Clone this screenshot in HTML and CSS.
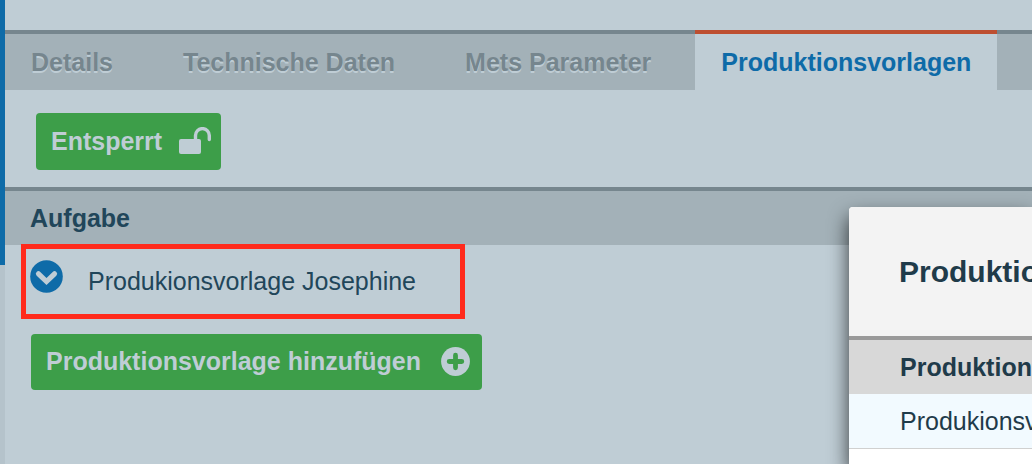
FILE: index.html
```html
<!DOCTYPE html>
<html lang="de">
<head>
<meta charset="utf-8">
<title>Produktionsvorlagen</title>
<link rel="stylesheet" href="styles.css">
</head>
<body>
<div class="app">
  <aside class="rail"><div class="rail-marker"></div></aside>
  <main class="content">
    <nav class="tabs">
      <a class="tab" href="#details">Details</a>
      <a class="tab" href="#technik">Technische Daten</a>
      <a class="tab" href="#mets">Mets Parameter</a>
      <a class="tab tab-active" href="#vorlagen" aria-current="page">Produktionsvorlagen</a>
    </nav>
    <div class="toolbar">
      <button class="button button-lock" type="button">Entsperrt
        <svg class="icon-lock" width="32" height="28" viewBox="0 0 32 28" aria-hidden="true">
          <rect x="0" y="12" width="22" height="15" rx="2" fill="currentColor"/>
          <path d="M16.500 13V8.500a6.900 6.900 0 0 1 13.800 0V12.500" fill="none" stroke="currentColor" stroke-width="3.400" stroke-linecap="round"/>
        </svg>
      </button>
    </div>
    <table class="tasks">
      <thead><tr><th colspan="2">Aufgabe</th></tr></thead>
      <tbody>
        <tr>
          <td class="toggle-cell">
            <button class="toggle" type="button" aria-label="Aufklappen">
              <svg width="33" height="33" viewBox="0 0 33 33" aria-hidden="true">
                <circle cx="16.500" cy="16.500" r="16.300" fill="#0e6ba8"/>
                <path d="M8.500 13.800l8 7.700 8-7.700" fill="none" stroke="#bfcdd5" stroke-width="5.200" stroke-linecap="round"/>
              </svg>
            </button>
          </td>
          <td class="name-cell">Produkionsvorlage Josephine</td>
        </tr>
      </tbody>
    </table>
    <div class="actions">
      <button class="button button-add" type="button">Produktionsvorlage hinzufügen
        <svg width="29" height="29" viewBox="0 0 29 29" aria-hidden="true">
          <circle cx="14.500" cy="14.500" r="14.400" fill="currentColor"/>
          <path d="M14.500 8.200v12.600M8.200 14.500h12.600" stroke="#3d9e49" stroke-width="4.800" stroke-linecap="round"/>
        </svg>
      </button>
    </div>
  </main>
</div>
<div class="highlight"></div>
<section class="dialog" role="dialog" aria-labelledby="dialog-title">
  <h2 class="dialog-title" id="dialog-title">Produktionsvorlage</h2>
  <table class="dialog-table">
    <thead><tr><th>Produktionsvorlage</th></tr></thead>
    <tbody><tr><td>Produkionsvorlage</td></tr></tbody>
  </table>
</section>
</body>
</html>
```
FILE: styles.css
```css
* { box-sizing: border-box; }

body {
  margin: 0;
  background: #bfcdd5;
  color: #21465a;
  font: 25px/30px "Liberation Sans", Arial, sans-serif;
}

.app { display: flex; min-height: 100vh; }
.rail { flex: 0 0 5px; background: #b5c3cb; }
.rail-marker { height: 265px; background: #0e6ba8; }
.content { flex: 1; min-width: 0; padding-top: 30px; }

.tabs {
  display: flex;
  gap: 18px;
  height: 60px;
  background: #a3b1b8;
  box-shadow: inset 0 4px #76868e;
}
.tab {
  padding: 17px 26px 13px;
  color: #76868e;
  font-weight: bold;
  text-decoration: none;
  text-shadow: 0 2px #bfcdd5;
  white-space: nowrap;
}
.tab-active {
  padding-top: 13px;
  border-top: 4px solid #bd4f31;
  background: #bfcdd5;
  color: #0e6ba8;
  text-shadow: none;
}

.toolbar { padding: 23px 31px 17px; }
.button {
  display: flex;
  align-items: center;
  gap: 17px;
  height: 57px;
  padding: 0 10px 2px 15px;
  border: 0;
  border-radius: 4px;
  background: #3d9e49;
  color: #bfcdd5;
  font: inherit;
  font-weight: bold;
  white-space: nowrap;
}
.button-add { gap: 20px; height: 56px; padding-right: 12px; }

.tasks { width: 100%; border-spacing: 0; border-top: 4px solid #76868e; }
.tasks th {
  padding: 12px 25px;
  background: #a3b1b8;
  text-align: left;
}
.tasks td { height: 73px; padding: 0; }
.tasks .name-cell { padding-bottom: 2px; }
.toggle-cell { width: 83px; }
.toggle {
  display: block;
  margin: 0 0 10px 25px;
  padding: 0;
  border: 0;
  background: none;
}
.toggle svg { display: block; }
.actions { padding: 16px 26px; }

.highlight {
  position: absolute;
  top: 244px;
  left: 21px;
  width: 444px;
  height: 75px;
  border: 5px solid #ff2a1c;
}

.dialog {
  position: absolute;
  top: 207px;
  left: 849px;
  right: 0;
  bottom: 0;
  overflow: hidden;
  border-radius: 4px 0 0 0;
  background: #fff;
  box-shadow: 0 10px 20px rgba(0, 0, 0, 0.75);
  color: #1f3b4a;
}
.dialog-title {
  margin: 0;
  padding: 47px 50px 46px;
  overflow: hidden;
  background: #f3f3f3;
  font-size: 30px;
  line-height: 36px;
}
.dialog-table { width: 100%; border-spacing: 0; border-top: 4px solid #999; }
.dialog-table th { padding: 12px 51px; background: #d8d8d8; text-align: left; }
.dialog-table td { padding: 12px 51px; border-bottom: 1px solid #d0d0d0; background: #f2faff; }
```
